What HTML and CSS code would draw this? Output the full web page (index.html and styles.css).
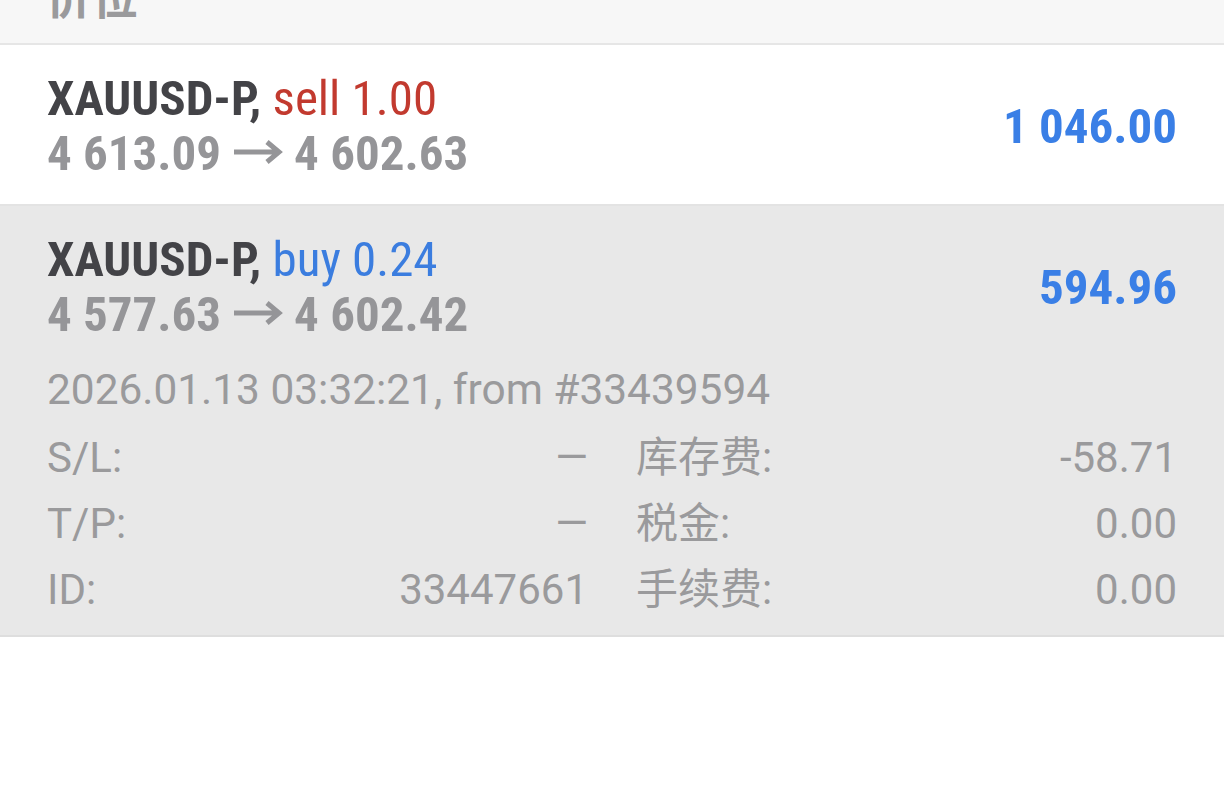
FILE: index.html
```html
<!DOCTYPE html>
<html lang="zh">
<head>
<meta charset="utf-8">
<title>仓位</title>
<link rel="stylesheet" href="styles.css">
</head>
<body>
<div class="hdr"><span class="hdr-title">价位</span></div>

<div class="pos">
  <div class="pos-main">
    <div class="sym">XAUUSD-P, <span class="sell">sell 1.00</span></div>
    <div class="price">4 613.09<svg class="arrow" viewBox="0 0 52 26" width="52" height="26"><path d="M2 13 H46 M35 3 L47 13 L35 23" /></svg>4 602.63</div>
  </div>
  <div class="profit">1 046.00</div>
</div>

<div class="pos open">
  <div class="pos-head">
    <div class="pos-main">
      <div class="sym">XAUUSD-P, <span class="buy">buy 0.24</span></div>
      <div class="price">4 577.63<svg class="arrow" viewBox="0 0 52 26" width="52" height="26"><path d="M2 13 H46 M35 3 L47 13 L35 23" /></svg>4 602.42</div>
    </div>
    <div class="profit">594.96</div>
  </div>
  <div class="date">2026.01.13 03:32:21, from #33439594</div>
  <div class="grid">
    <div class="kv"><span>S/L:</span><span>—</span></div>
    <div class="kv"><span>库存费:</span><span>-58.71</span></div>
    <div class="kv"><span>T/P:</span><span>—</span></div>
    <div class="kv"><span>税金:</span><span>0.00</span></div>
    <div class="kv"><span>ID:</span><span>33447661</span></div>
    <div class="kv"><span>手续费:</span><span>0.00</span></div>
  </div>
</div>
</body>
</html>
```

FILE: styles.css
```css
html, body {
  margin: 0;
  padding: 0;
  background: #ffffff;
  font-family: Roboto, "Noto Sans CJK SC", sans-serif;
}

.hdr {
  height: 43px;
  background: #f7f7f7;
  border-bottom: 2px solid #e6e6e6;
  overflow: hidden;
  padding-left: 46px;
}

.hdr-title {
  display: block;
  font-family: "Noto Sans CJK SC", sans-serif;
  font-weight: 700;
  font-size: 46px;
  line-height: 46px;
  margin-top: -29px;
  color: #9a9a9c;
}

.pos {
  padding: 26px 47px 23px;
  display: flex;
  align-items: center;
  justify-content: space-between;
  border-bottom: 2px solid #e3e3e3;
}

.pos.open {
  display: block;
  background: #e8e8e8;
  padding-bottom: 12px;
  border-bottom-color: #dedede;
}

.pos-head {
  display: flex;
  align-items: center;
  justify-content: space-between;
}

.sym, .price, .profit {
  font-family: "Roboto Condensed", Roboto, sans-serif;
  font-stretch: 75%;
  font-weight: 700;
  font-size: 49px;
  line-height: 55px;
}

.sym { color: #434347; }
.sym span { font-weight: 400; }
.sell { color: #c23a2f; }
.buy { color: #3b7ddf; }
.price { color: #959598; }
.profit { color: #3a7fe6; }

.arrow {
  margin: 0 10px 0 11px;
  vertical-align: 5px;
}

.arrow path {
  fill: none;
  stroke: #959598;
  stroke-width: 5;
}

.date {
  margin-top: 15px;
  font-size: 42.4px;
  line-height: 66px;
  color: #9a9a9c;
}

.grid {
  display: grid;
  grid-template-columns: 1fr 1fr;
  column-gap: 48px;
  margin-top: 2px;
}

.kv {
  display: flex;
  justify-content: space-between;
  font-size: 42px;
  line-height: 66px;
  color: #9a9a9c;
}
```
